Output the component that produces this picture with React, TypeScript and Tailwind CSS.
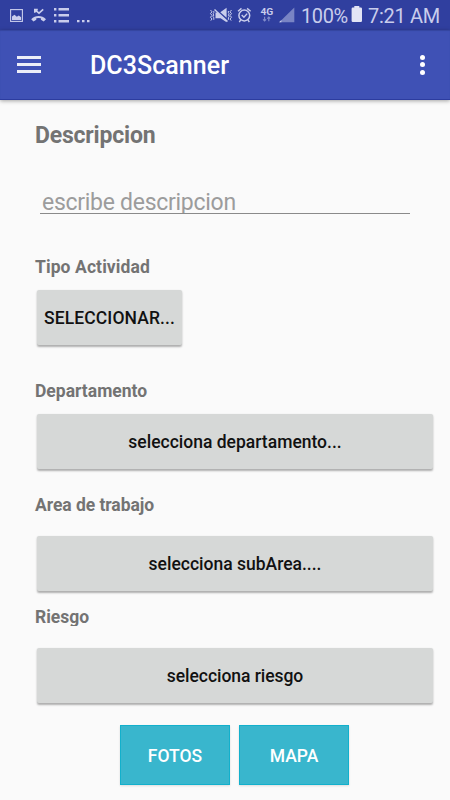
import type { ReactNode } from 'react';
import clsx from 'clsx';

function StatusBar() {
  return (
    <div className="h-[30px] shrink-0 bg-[#303f9f] text-[#c9cdec] flex justify-between">
      <svg width="100" height="30" viewBox="0 0 100 30" fill="currentColor">
        {/* picture */}
        <rect x="10.6" y="9.6" width="11.8" height="11.8" fill="none" stroke="currentColor" strokeWidth="1.1" />
        <path d="M12 20v-3.6l2.5-1.7 2.3 2 2-1.3 2.3 1.8V20z" />
        {/* missed call */}
        <path d="M34.8 12.8V9.6h3M35 9.8l4 3.4 4.2-3.9" fill="none" stroke="currentColor" strokeWidth="1.6" />
        <path d="M31.2 19.2c4.2-4.2 10.6-4.2 14.8 0l-2.3 2.3-2.8-1.7v-1.5a8 8 0 0 0-4.6 0v1.5l-2.8 1.7z" />
        {/* list */}
        <path d="M54 8h2.4v2.4H54zM54 14h2.4v2.4H54zM54 20h2.4v2.4H54zM58.5 8H69v2.4H58.5zM58.5 14H69v2.4H58.5zM58.5 20H69v2.4H58.5z" />
        <path d="M77 20h2.5v2.3H77zM82 20h2.5v2.3H82zM87 20h2.5v2.3H87z" />
      </svg>
      <div className="flex pr-[15px]">
        <svg width="96" height="30" viewBox="204 0 96 30" fill="currentColor">
          {/* vibrate + muted speaker */}
          <path d="M210.5 10l1.5 1.8-1.5 1.8 1.5 1.8-1.5 1.8 1.5 1.8-1.2 1.6M213.8 11v1.8l-.8 1 .8 1.3-.8 1.3.8 1.4v2M231.5 10l-1.5 1.8 1.5 1.8-1.5 1.8 1.5 1.8-1.5 1.8 1.2 1.6M228.4 11v1.8l.8 1-.8 1.3.8 1.3-.8 1.4v2" fill="none" stroke="currentColor" strokeWidth="1" />
          <path d="M215.5 12.4h2.5l8.6 8v1.8l-6-4h-5.1zM220.3 12.2l6.3-4.4v10z" />
          <path d="M214.5 9.5l13 12" stroke="currentColor" strokeWidth="1.4" />
          {/* alarm */}
          <circle cx="244.3" cy="15.5" r="5.4" fill="none" stroke="currentColor" strokeWidth="1.5" />
          <path d="M238 11.2l3.5-2.8M250.6 11.2l-3.5-2.8M240.8 19.6l-1.5 2.5M247.8 19.6l1.5 2.5M241.7 15.1l2.2 2.2 3.3-3.7" fill="none" stroke="currentColor" strokeWidth="1.4" />
          <text x="260.4" y="14.7" fontSize="9.5" fontWeight="700" textLength="12.8" lengthAdjust="spacingAndGlyphs">4G</text>
          <path d="M264.6 16.8v4.2m-1.5-1.6l1.5 1.6 1.5-1.6M268.8 21.3v-4.2m-1.5 1.6l1.5-1.6 1.5 1.6" fill="none" stroke="#828dcb" strokeWidth="1.1" />
          {/* signal */}
          <path d="M294.3 7.4v14.8h-15z" fill="#7984c4" />
          <path d="M281.4 20v2.2h-2.3z" />
        </svg>
        <span className="w-[51px] pl-px text-[20px] tracking-[-0.4px] leading-[32px] whitespace-nowrap">100%</span>
        <svg width="12" height="30" viewBox="0 0 12 30" fill="#e2e4f5">
          <path d="M3.3 6h5v1.5h1.5q1.2 0 1.2 1.2v12.1q0 1.2-1.2 1.2h-8q-1.2 0-1.2-1.2V8.7q0-1.2 1.2-1.2h1.5z" />
        </svg>
        <span className="w-[72px] pl-[5px] text-[20px] tracking-[-0.3px] leading-[32px] whitespace-nowrap">7:21 AM</span>
      </div>
    </div>
  );
}

function AppBar() {
  return (
    <header className="h-[70px] shrink-0 bg-[#3f51b5] text-white flex items-center pl-[17px] pr-[23px] border-b border-[#2c3c9f] shadow-[0_1px_4px_rgba(0,0,0,0.35),inset_0_1px_1px_#35459f]">
      <button className="w-6 flex flex-col gap-1" aria-label="Menu">
        <span className="h-[3px] w-6 bg-[#eceef8]" />
        <span className="h-[3px] w-6 bg-[#eceef8]" />
        <span className="h-[3px] w-6 bg-[#eceef8]" />
      </button>
      <h1 className="ml-[49px] pt-[3px] text-[25px] tracking-[0.05px] font-medium leading-8">DC3Scanner</h1>
      <button className="ml-auto w-[9px] flex flex-col items-center gap-[2.5px]" aria-label="More">
        <span className="size-[5px] rounded-full bg-white" />
        <span className="size-[5px] rounded-full bg-white" />
        <span className="size-[5px] rounded-full bg-white" />
      </button>
    </header>
  );
}

function Label({ className, children }: { className?: string; children: ReactNode }) {
  return (
    <div className={clsx('text-[17.5px] leading-6 font-bold text-[#737373] whitespace-nowrap', className)}>
      {children}
    </div>
  );
}

function SelectButton({ className, children }: { className?: string; children: ReactNode }) {
  return (
    <button
      className={clsx(
        'ml-[2px] h-[55px] pt-[2px] shrink-0 rounded-[2px] bg-[#d6d8d7] text-[17.5px] font-medium text-[#111] whitespace-nowrap shadow-[0_1.5px_2px_rgba(0,0,0,0.3)]',
        className,
      )}
    >
      {children}
    </button>
  );
}

function ActionButton({ children }: { children: ReactNode }) {
  return (
    <button className="w-[110px] h-[60px] pt-[2px] border border-[#12b0cc] bg-[#39b6cd] text-[17.5px] font-medium text-white shadow-[0_1px_2px_rgba(0,0,0,0.12)]">
      {children}
    </button>
  );
}

export default function App() {
  return (
    <div className="w-[450px] h-[800px] overflow-hidden bg-[#fafafa] flex flex-col font-['Roboto',sans-serif]">
      <StatusBar />
      <AppBar />
      <main className="flex flex-col pl-[35px]">
        <h2 className="mt-[20px] h-8 text-[23px] tracking-[-0.2px] leading-8 font-bold text-[#737373]">Descripcion</h2>
        <input
          className="mt-[35px] ml-[5px] w-[370px] h-[27px] pl-[2px] pt-[5px] border-b-[1.5px] border-[#8a8a8a] text-[23px] tracking-[-0.28px] leading-6 placeholder:text-[#9c9c9c] outline-none"
          placeholder="escribe descripcion"
        />
        <Label className="mt-[41px] tracking-[0.1px]">Tipo Actividad</Label>
        <SelectButton className="mt-[11px] w-[145px] tracking-[0.1px]">SELECCIONAR...</SelectButton>
        <Label className="mt-[34px]">Departamento</Label>
        <SelectButton className="mt-[11px] w-[396px]">selecciona departamento...</SelectButton>
        <Label className="mt-[24px] tracking-[-0.05px]">Area de trabajo</Label>
        <SelectButton className="mt-[19px] w-[396px]">selecciona subArea....</SelectButton>
        {/* fixed label height cuts the descender */}
        <Label className="mt-[14px] h-[21px] mb-[3px] overflow-hidden">Riesgo</Label>
        <SelectButton className="mt-[19px] w-[396px] tracking-[-0.05px]">selecciona riesgo</SelectButton>
        <div className="mt-[22px] ml-[85px] flex gap-[9px]">
          <ActionButton>FOTOS</ActionButton>
          <ActionButton>MAPA</ActionButton>
        </div>
      </main>
    </div>
  );
}
